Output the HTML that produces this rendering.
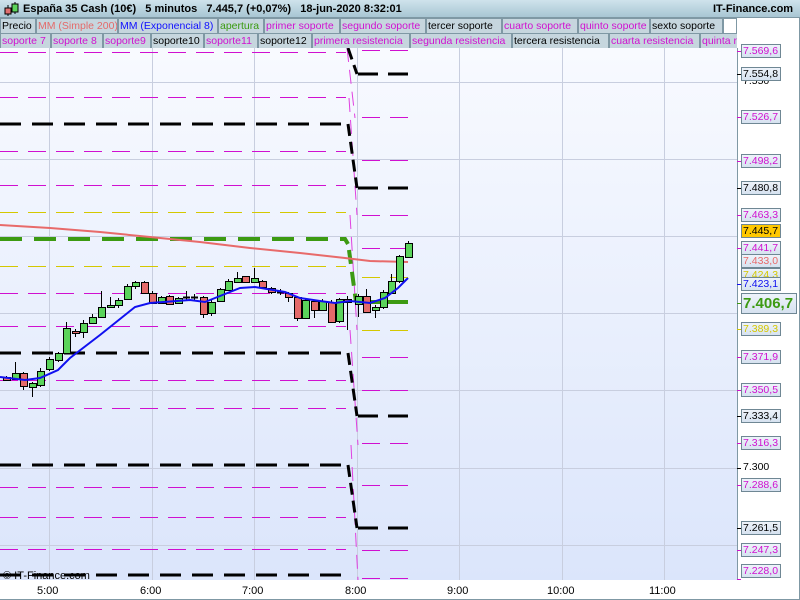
<!DOCTYPE html>
<html><head><meta charset="utf-8"><style>
*{margin:0;padding:0;box-sizing:border-box}
body{width:800px;height:600px;overflow:hidden;background:#fff;font-family:"Liberation Sans",sans-serif;position:relative}
#title{position:absolute;left:0;top:0;width:800px;height:18px;background:linear-gradient(#cfe3ec,#a8c6d3);border-bottom:1px solid #7f98a4;font-size:11px;font-weight:bold;color:#000;white-space:nowrap}
#title span{position:absolute;top:3px}
.row{position:absolute;left:0;height:16px;font-size:10.5px;white-space:nowrap;overflow:hidden;width:737px}
.row div{position:absolute;top:0;height:16px;border:1px solid #7f98a4;background:#c6d6de;padding:0 1px;line-height:14px;overflow:hidden}
#right{position:absolute;left:737px;top:18px;width:63px;height:582px;background:#fff}
.lb{position:absolute;left:741px;width:40px;height:14px;border:1px solid #6f8794;background:linear-gradient(#eef3fa,#d6e2f0);font-size:10.5px;line-height:12px;padding-left:1px;white-space:nowrap;overflow:hidden}
.tk{position:absolute;left:737px;width:4px;height:1px}
.ax{position:absolute;top:585px;font-size:11px}
.pl{position:absolute;left:743px;font-size:10.5px}
</style></head><body>
<div id="right"></div>
<div id="title">
<svg style="position:absolute;left:3px;top:1px" width="16" height="16"><line x1="5" y1="4" x2="5" y2="15" stroke="#000"/><rect x="2" y="7" width="6" height="6" fill="#e07070" stroke="#000"/><line x1="12" y1="1" x2="12" y2="13" stroke="#000"/><rect x="9" y="3" width="6" height="8" fill="#5bd45b" stroke="#000"/></svg>
<span style="left:23px">España 35 Cash (10€)&nbsp;&nbsp;&nbsp;5 minutos&nbsp;&nbsp;&nbsp;7.445,7 (+0,07%)&nbsp;&nbsp;&nbsp;18-jun-2020 8:32:01</span>
<span style="left:713px">IT-Finance.com</span>
</div>
<div class="row" style="top:18px">
<div style="left:0;width:36px">Precio</div>
<div style="left:36px;width:82px;color:#e46a6a">MM (Simple 200)</div>
<div style="left:118px;width:100px;color:#1010ff">MM (Exponencial 8)</div>
<div style="left:218px;width:46px;color:#3a9a10">apertura</div>
<div style="left:264px;width:76px;color:#d010d0">primer soporte</div>
<div style="left:340px;width:86px;color:#d010d0">segundo soporte</div>
<div style="left:426px;width:76px">tercer soporte</div>
<div style="left:502px;width:76px;color:#d010d0">cuarto soporte</div>
<div style="left:578px;width:72px;color:#d010d0">quinto soporte</div>
<div style="left:650px;width:73px">sexto soporte</div>
<div style="left:723px;width:14px;background:#fff"></div>
</div>
<div class="row" style="top:33px">
<div style="left:0;width:51px;color:#d010d0">soporte 7</div>
<div style="left:51px;width:52px;color:#d010d0">soporte 8</div>
<div style="left:103px;width:48px;color:#d010d0">soporte9</div>
<div style="left:151px;width:53px">soporte10</div>
<div style="left:204px;width:54px;color:#d010d0">soporte11</div>
<div style="left:258px;width:54px">soporte12</div>
<div style="left:312px;width:98px;color:#d010d0">primera resistencia</div>
<div style="left:410px;width:102px;color:#d010d0">segunda resistencia</div>
<div style="left:512px;width:97px">tercera resistencia</div>
<div style="left:609px;width:91px;color:#d010d0">cuarta resistencia</div>
<div style="left:700px;width:40px;color:#d010d0">quinta resistencia</div>
</div>
<svg style="position:absolute;left:0;top:48px" width="738" height="532" viewBox="0 48 738 532">
<defs><linearGradient id="bg" x1="0" y1="0" x2="0" y2="1"><stop offset="0" stop-color="#f8faff"/><stop offset="1" stop-color="#dbe5fb"/></linearGradient></defs>
<rect x="0" y="48" width="738" height="532" fill="url(#bg)"/>
<g stroke="#c8cedf" stroke-width="1">
<line x1="49.5" y1="48" x2="49.5" y2="580"/><line x1="152.5" y1="48" x2="152.5" y2="580"/><line x1="254.5" y1="48" x2="254.5" y2="580"/><line x1="357.5" y1="48" x2="357.5" y2="580"/><line x1="459.5" y1="48" x2="459.5" y2="580"/><line x1="562.5" y1="48" x2="562.5" y2="580"/><line x1="664.5" y1="48" x2="664.5" y2="580"/>
<line x1="0" y1="82.5" x2="737" y2="82.5"/><line x1="0" y1="159.5" x2="737" y2="159.5"/><line x1="0" y1="236.5" x2="737" y2="236.5"/><line x1="0" y1="313.5" x2="737" y2="313.5"/><line x1="0" y1="390.5" x2="737" y2="390.5"/><line x1="0" y1="468.5" x2="737" y2="468.5"/><line x1="0" y1="545.5" x2="737" y2="545.5"/>
</g>
<g stroke="#d010d0" stroke-width="1" fill="none" stroke-dasharray="18 10">
<line x1="0" y1="52.5" x2="346" y2="52.5"/><line x1="0" y1="97.5" x2="346" y2="97.5"/><line x1="0" y1="151.5" x2="346" y2="151.5"/><line x1="0" y1="185.5" x2="346" y2="185.5"/><line x1="0" y1="293.5" x2="346" y2="293.5"/><line x1="0" y1="326.5" x2="346" y2="326.5"/><line x1="0" y1="380.5" x2="346" y2="380.5"/><line x1="0" y1="408.5" x2="346" y2="408.5"/><line x1="0" y1="487.5" x2="346" y2="487.5"/><line x1="0" y1="517.5" x2="346" y2="517.5"/><line x1="0" y1="549.5" x2="346" y2="549.5"/>
<line x1="362" y1="50.5" x2="408" y2="50.5"/><line x1="362" y1="117.5" x2="408" y2="117.5"/><line x1="362" y1="160.5" x2="408" y2="160.5"/><line x1="362" y1="215.5" x2="408" y2="215.5"/><line x1="362" y1="248.5" x2="408" y2="248.5"/><line x1="362" y1="357.5" x2="408" y2="357.5"/><line x1="362" y1="390.5" x2="408" y2="390.5"/><line x1="362" y1="443.5" x2="408" y2="443.5"/><line x1="362" y1="485.5" x2="408" y2="485.5"/><line x1="362" y1="550.5" x2="408" y2="550.5"/><line x1="362" y1="578.5" x2="408" y2="578.5"/>
</g>
<g stroke="#e040e0" stroke-width="1" fill="none" stroke-dasharray="14 8">
<line x1="347" y1="48" x2="355" y2="118"/><line x1="349" y1="98" x2="357" y2="215"/><line x1="350" y1="215" x2="357" y2="330"/><line x1="350" y1="330" x2="358" y2="445"/><line x1="351" y1="445" x2="358" y2="580"/>
</g>
<g stroke="#d4c800" stroke-width="1" fill="none" stroke-dasharray="18 10">
<line x1="0" y1="212.5" x2="346" y2="212.5"/><line x1="0" y1="266.5" x2="346" y2="266.5"/>
<line x1="362" y1="277.5" x2="408" y2="277.5"/><line x1="362" y1="330.5" x2="408" y2="330.5"/>
</g>
<g stroke="#000" stroke-width="3" fill="none" stroke-dasharray="21 11">
<line x1="0" y1="124" x2="342" y2="124"/><line x1="0" y1="353" x2="342" y2="353"/><line x1="0" y1="465" x2="342" y2="465"/><line x1="0" y1="575" x2="342" y2="575"/>
<line x1="358" y1="74" x2="408" y2="74" stroke-dasharray="20 10"/><line x1="358" y1="188" x2="408" y2="188" stroke-dasharray="20 10"/><line x1="358" y1="416" x2="408" y2="416" stroke-dasharray="20 10"/><line x1="358" y1="528" x2="408" y2="528" stroke-dasharray="20 10"/>
<line x1="348" y1="48" x2="357" y2="74" stroke-dasharray="12 6"/><line x1="348" y1="124" x2="357" y2="188" stroke-dasharray="12 6"/><line x1="348" y1="353" x2="357" y2="416" stroke-dasharray="12 6"/><line x1="348" y1="465" x2="357" y2="528" stroke-dasharray="12 6"/>
</g>
<g stroke="#3c9a12" stroke-width="4" fill="none">
<polyline points="0,239 345,239 348,244" stroke-dasharray="22 12"/>
<line x1="349" y1="250" x2="356" y2="302" stroke-dasharray="14 8"/>
<line x1="358" y1="302" x2="408" y2="302"/>
</g>
<polyline fill="none" stroke="#e86a6a" stroke-width="2" points="0,225 50,228 100,232 150,237 200,242 250,248 300,253 345,258 370,261 408,262"/>
<g stroke="#000" stroke-width="1" id="c"></g>
<polyline fill="none" stroke="#1010f0" stroke-width="2" points="0,377 25,380 40,378 58,370 70,358 100,335 125,315 135,307 150,303 190,300 205,302 220,296 240,288 255,287 285,292 300,298 320,301 335,303 350,301 370,303 385,298 398,288 408,278"/>
<line x1="737.5" y1="48" x2="737.5" y2="580" stroke="#7f98a4"/>
<line x1="0" y1="580.5" x2="737" y2="580.5" stroke="#7f98a4"/>
<text x="3" y="579" font-size="11" font-family="Liberation Sans" fill="#000">© IT-Finance.com</text>
</svg>
<div class="ax" style="left:37px">5:00</div><div class="ax" style="left:140px">6:00</div><div class="ax" style="left:242px">7:00</div><div class="ax" style="left:345px">8:00</div><div class="ax" style="left:447px">9:00</div><div class="ax" style="left:547px">10:00</div><div class="ax" style="left:649px">11:00</div>
<div style="position:absolute;left:0;top:599px;width:800px;height:1px;background:#7f98a4"></div>
<div style="position:absolute;left:799px;top:18px;width:1px;height:582px;background:#7f98a4"></div>
<div class="tk" style="top:51px;background:#d010d0"></div><div class="lb" style="top:44px;color:#d010d0">7.569,6</div>
<div class="pl" style="top:75px">7.550</div>
<div class="tk" style="top:74px;background:#000"></div><div class="lb" style="top:67px">7.554,8</div>
<div class="tk" style="top:117px;background:#d010d0"></div><div class="lb" style="top:110px;color:#d010d0">7.526,7</div>
<div class="tk" style="top:161px;background:#d010d0"></div><div class="lb" style="top:154px;color:#d010d0">7.498,2</div>
<div class="tk" style="top:188px;background:#000"></div><div class="lb" style="top:181px">7.480,8</div>
<div class="tk" style="top:215px;background:#d010d0"></div><div class="lb" style="top:208px;color:#d010d0">7.463,3</div>
<div class="tk" style="top:248px;background:#d010d0"></div>
<div class="lb" style="top:254px;color:#e86a6a">7.433,0</div>
<div class="lb" style="top:268px;color:#d4c800;height:10px">7.424,3</div>
<div class="lb" style="top:241px;color:#d010d0">7.441,7</div>
<div class="lb" style="top:224px;background:#ffc800">7.445,7</div>
<div class="tk" style="top:284px;background:#1010f0"></div><div class="lb" style="top:277px;color:#1010f0">7.423,1</div>
<div class="pl" style="top:304px">7.400</div>
<div class="tk" style="top:303px;background:#3c9a12"></div><div class="lb" style="top:293px;width:56px;height:21px;font-size:15px;line-height:19px;font-weight:bold;color:#3c9a12">7.406,7</div>
<div class="tk" style="top:329px;background:#d4c800"></div><div class="lb" style="top:322px;color:#d4c800">7.389,3</div>
<div class="tk" style="top:357px;background:#d010d0"></div><div class="lb" style="top:350px;color:#d010d0">7.371,9</div>
<div class="tk" style="top:390px;background:#d010d0"></div><div class="lb" style="top:383px;color:#d010d0">7.350,5</div>
<div class="tk" style="top:416px;background:#000"></div><div class="lb" style="top:409px">7.333,4</div>
<div class="tk" style="top:443px;background:#d010d0"></div><div class="lb" style="top:436px;color:#d010d0">7.316,3</div>
<div class="tk" style="top:468px;background:#000"></div><div class="pl" style="top:461px">7.300</div>
<div class="tk" style="top:485px;background:#d010d0"></div><div class="lb" style="top:478px;color:#d010d0">7.288,6</div>
<div class="tk" style="top:528px;background:#000"></div><div class="lb" style="top:521px">7.261,5</div>
<div class="tk" style="top:550px;background:#d010d0"></div><div class="lb" style="top:543px;color:#d010d0">7.247,3</div>
<div class="tk" style="top:579px;background:#d010d0"></div><div class="lb" style="top:564px;color:#d010d0">7.228,0</div>
<script>
var d=[[6,377,380,376,381],[15,379,373,362,380],[23,373,386,372,390],[32,387,383,382,397],[40,385,371,368,387],[49,369,359,357,371],[58,360,353,352,362],[66,353,328,322,353],[75,331,333,329,337],[83,332,323,320,338],[92,323,317,314,324],[101,317,307,291,318],[110,307,305,297,308],[118,305,300,298,308],[127,299,286,284,300],[135,286,282,281,289],[144,282,293,281,294],[152,293,303,291,304],[161,303,297,296,304],[169,296,304,295,305],[178,303,298,297,304],[186,297,297,291,300],[194,297,297,294,300],[203,297,314,296,318],[211,313,302,300,316],[220,301,289,288,302],[228,290,281,279,291],[237,282,278,272,283],[245,276,282,276,283],[254,282,278,268,283],[262,281,287,280,289],[271,288,292,287,294],[280,292,292,289,295],[288,293,297,292,302],[297,297,318,296,321],[305,318,300,299,319],[314,301,310,300,318],[322,310,301,299,311],[331,302,322,300,323],[339,321,299,298,323],[347,299,302,296,330],[358,304,296,294,317],[366,296,312,289,313],[375,310,307,305,318],[383,307,292,290,309],[391,293,281,274,294],[399,281,256,255,283],[408,257,243,241,258]];
var g=document.getElementById('c'),s='';
d.forEach(function(c){var x=c[0],o=c[1],cl=c[2],t=Math.min(o,cl),b=Math.max(o,cl);
s+='<line x1="'+(x+.5)+'" y1="'+c[3]+'" x2="'+(x+.5)+'" y2="'+c[4]+'"/>';
if(b-t<1){s+='<line x1="'+(x-3)+'" y1="'+(o+.5)+'" x2="'+(x+4)+'" y2="'+(o+.5)+'" stroke-width="2"/>';}
else s+='<rect x="'+(x-3+.5)+'" y="'+(t+.5)+'" width="7" height="'+(b-t)+'" fill="'+(cl<o?'#5bd45b':'#e46a6a')+'"/>';});
g.innerHTML=s;
</script>
</body></html>
